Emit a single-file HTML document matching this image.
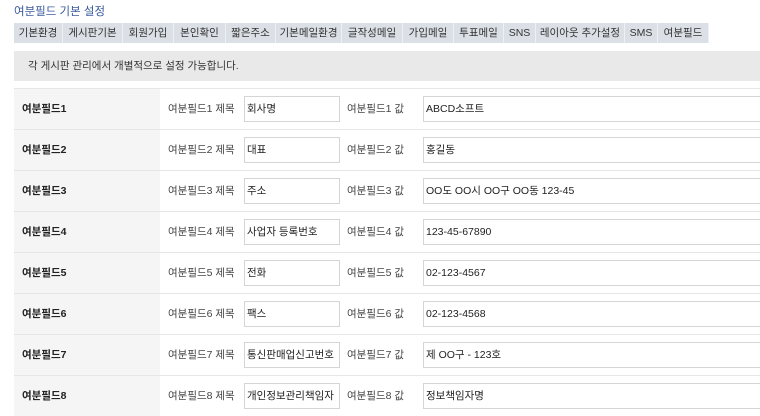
<!DOCTYPE html>
<html><head><meta charset="utf-8"><style>
*{margin:0;padding:0;box-sizing:border-box}
body{width:760px;height:413px;overflow:hidden;background:#fff;font-family:"Liberation Sans","Noto Sans CJK KR",sans-serif;font-size:11px;color:#333;position:relative}
.t{position:absolute;left:14px;top:3px;font-size:11.5px;color:#3a5a9c}
.tabs{position:absolute;top:23px;height:20px;background:#dae0e5}
.tab{position:absolute;top:23px;height:20px;line-height:20px;text-align:center;background:#dae0e5;border-right:1px solid #eef1f3;font-size:10.5px;color:#333}
.notice{position:absolute;left:14px;top:51px;width:746px;height:30px;background:#e9e9e9;line-height:30px;padding-left:14px;font-size:10.5px}
.row{position:absolute;left:14px;width:746px;height:41px;border-top:1px solid #e6e6e6}
.h{position:absolute;left:0;top:0;width:146px;height:40px;background:#f5f5f5;line-height:40px;padding-left:8px;font-weight:bold;font-size:10.5px;color:#222}
.l{position:absolute;top:0;line-height:40px;font-size:10.5px;color:#444}
.i{position:absolute;top:7px;height:26px;border:1px solid #d5d5d5;background:#fff;line-height:24px;padding-left:2px;font-size:10.5px;color:#222}
</style></head><body>
<div class="t">여분필드 기본 설정</div>
<div class="tab" style="left:14px;width:49px">기본환경</div>
<div class="tab" style="left:63px;width:60px">게시판기본</div>
<div class="tab" style="left:123px;width:51px">회원가입</div>
<div class="tab" style="left:174px;width:52px">본인확인</div>
<div class="tab" style="left:226px;width:50px">짧은주소</div>
<div class="tab" style="left:276px;width:66px">기본메일환경</div>
<div class="tab" style="left:342px;width:61px">글작성메일</div>
<div class="tab" style="left:403px;width:51px">가입메일</div>
<div class="tab" style="left:454px;width:50px">투표메일</div>
<div class="tab" style="left:504px;width:32px">SNS</div>
<div class="tab" style="left:536px;width:89px">레이아웃 추가설정</div>
<div class="tab" style="left:625px;width:33px">SMS</div>
<div class="tab" style="left:658px;width:51px">여분필드</div>
<div class="notice">각 게시판 관리에서 개별적으로 설정 가능합니다.</div>

<div class="row" style="top:88px"><div class="h">여분필드1</div><div class="l" style="left:154px">여분필드1 제목</div><div class="i" style="left:230px;width:96px">회사명</div><div class="l" style="left:333px">여분필드1 값</div><div class="i" style="left:409px;width:360px">ABCD소프트</div></div>
<div class="row" style="top:129px"><div class="h">여분필드2</div><div class="l" style="left:154px">여분필드2 제목</div><div class="i" style="left:230px;width:96px">대표</div><div class="l" style="left:333px">여분필드2 값</div><div class="i" style="left:409px;width:360px">홍길동</div></div>
<div class="row" style="top:170px"><div class="h">여분필드3</div><div class="l" style="left:154px">여분필드3 제목</div><div class="i" style="left:230px;width:96px">주소</div><div class="l" style="left:333px">여분필드3 값</div><div class="i" style="left:409px;width:360px">OO도 OO시 OO구 OO동 123-45</div></div>
<div class="row" style="top:211px"><div class="h">여분필드4</div><div class="l" style="left:154px">여분필드4 제목</div><div class="i" style="left:230px;width:96px">사업자 등록번호</div><div class="l" style="left:333px">여분필드4 값</div><div class="i" style="left:409px;width:360px">123-45-67890</div></div>
<div class="row" style="top:252px"><div class="h">여분필드5</div><div class="l" style="left:154px">여분필드5 제목</div><div class="i" style="left:230px;width:96px">전화</div><div class="l" style="left:333px">여분필드5 값</div><div class="i" style="left:409px;width:360px">02-123-4567</div></div>
<div class="row" style="top:293px"><div class="h">여분필드6</div><div class="l" style="left:154px">여분필드6 제목</div><div class="i" style="left:230px;width:96px">팩스</div><div class="l" style="left:333px">여분필드6 값</div><div class="i" style="left:409px;width:360px">02-123-4568</div></div>
<div class="row" style="top:334px"><div class="h">여분필드7</div><div class="l" style="left:154px">여분필드7 제목</div><div class="i" style="left:230px;width:96px">통신판매업신고번호</div><div class="l" style="left:333px">여분필드7 값</div><div class="i" style="left:409px;width:360px">제 OO구 - 123호</div></div>
<div class="row" style="top:375px"><div class="h">여분필드8</div><div class="l" style="left:154px">여분필드8 제목</div><div class="i" style="left:230px;width:96px">개인정보관리책임자</div><div class="l" style="left:333px">여분필드8 값</div><div class="i" style="left:409px;width:360px">정보책임자명</div></div>
</body></html>
